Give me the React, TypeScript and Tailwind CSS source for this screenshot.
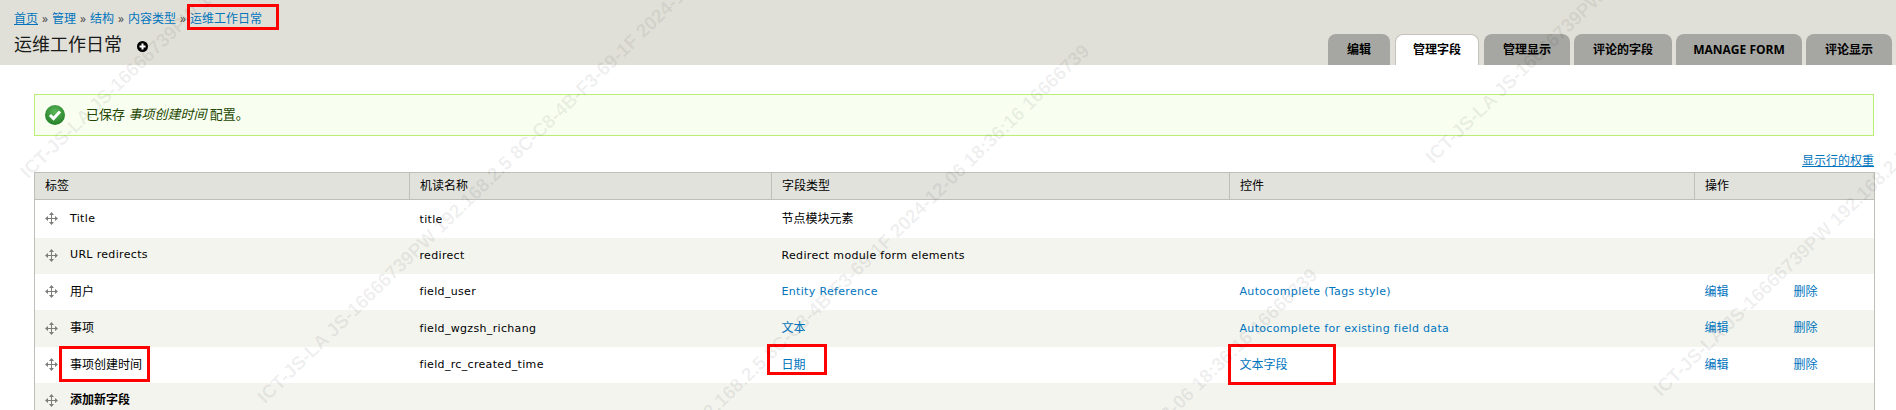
const FONT = "font-['Open_Sans','Noto_Sans_CJK_SC',sans-serif]";

const tabs = [
  { label: "编辑", w: "w-[62px]" },
  { label: "管理字段", w: "w-[84px] mx-[1px]", active: true },
  { label: "管理显示", w: "w-[86px]" },
  { label: "评论的字段", w: "w-[98px]" },
  { label: "MANAGE FORM", w: "w-[126px]" },
  { label: "评论显示", w: "w-[86px]" },
];

const rows = [
  { label: "Title", name: "title", type: "节点模块元素", h: "h-[38px]" },
  { label: "URL redirects", name: "redirect", type: "Redirect module form elements", h: "h-[36px]", even: true },
  { label: "用户", name: "field_user", type: "Entity Reference", link: true, widget: "Autocomplete (Tags style)", ops: true, h: "h-[36px]" },
  { label: "事项", name: "field_wgzsh_richang", type: "文本", link: true, widget: "Autocomplete for existing field data", ops: true, h: "h-[37px]", even: true },
  { label: "事项创建时间", name: "field_rc_created_time", type: "日期", link: true, widget: "文本字段", ops: true, h: "h-[36px]" },
  { label: "添加新字段", name: "", type: "", h: "h-[36px]", even: true, bold: true },
];

const marks = [
  "left-[24px] top-[161px]",
  "left-[261px] top-[386px]",
  "left-[515px] top-[586px]",
  "left-[743px] top-[810px]",
  "left-[1429px] top-[146px]",
  "left-[1657px] top-[379px]",
];

const redBoxes = [
  "left-[187px] top-[4px] w-[92px] h-[26px]",
  "left-[59px] top-[346px] w-[91px] h-[36px]",
  "left-[767px] top-[344px] w-[60px] h-[31px]",
  "left-[1228px] top-[344px] w-[108px] h-[41px]",
];

function T({ s }: { s: string }) {
  const latin = !/[\u4e00-\u9fff]/.test(s);
  return <span className={latin ? "font-['DejaVu_Sans',sans-serif] text-[11px] tracking-[0.33px]" : ""}>{s}</span>;
}

function DragIcon() {
  return (
    <svg width="13" height="13" viewBox="0 0 13 13" className="shrink-0">
      <path d="M6.5 1.5V11.5M1.5 6.5H11.5" stroke="#7d7d7a" strokeWidth="1" fill="none" />
      <path d="M6.5 0L4 3H9ZM6.5 13L4 10H9ZM0 6.5L3 4V9ZM13 6.5L10 4V9Z" fill="#7d7d7a" />
    </svg>
  );
}

function A({ children, className = "" }: { children: React.ReactNode; className?: string }) {
  return <a className={`text-[#0074bd] ${className}`}>{children}</a>;
}

export default function App() {
  return (
    <div className={`relative h-[410px] w-[1896px] overflow-hidden bg-white text-[12px] text-black ${FONT}`}>
      <header className="flex h-[65px] items-end justify-between bg-[#e0e0d8] pl-[14px] pr-[4px]">
        <div className="self-start pt-[10px]">
          <div className="flex h-[18px] items-center gap-[4px] text-[12px] text-[#444]">
            <A className="underline">首页</A><span>»</span>
            <A>管理</A><span>»</span>
            <A>结构</A><span>»</span>
            <A>内容类型</A><span>»</span>
            <A>运维工作日常</A>
          </div>
          <div className="mt-[2px] flex items-center">
            <h1 className="text-[18px] font-normal leading-[28px] text-[#1a1a1a]">运维工作日常</h1>
            <svg width="11" height="11" viewBox="0 0 11 11" className="ml-[15px] mt-[4px]">
              <circle cx="5.5" cy="5.5" r="5.5" fill="#000" />
              <path d="M5.5 2.5V8.5M2.5 5.5H8.5" stroke="#fff" strokeWidth="2" />
            </svg>
          </div>
        </div>
        <nav className="flex gap-[4px]">
          {tabs.map((t) => (
            <div
              key={t.label}
              className={`${t.w} flex h-[31px] items-center justify-center rounded-t-[8px] text-[12px] font-bold ${
                t.active ? "border border-b-0 border-[#c4c4bc] bg-white" : "bg-[#a6a7a2]"
              }`}
            >
              {t.label}
            </div>
          ))}
        </nav>
      </header>

      <main className="pl-[34px] pr-[22px] pt-[29px]">
        <div className="flex h-[42px] items-center border border-[#bbee77] bg-[#f8fff0] pl-[10px] text-[13px] text-[#234600]">
          <svg width="20" height="20" viewBox="0 0 20 20">
            <defs>
              <radialGradient id="ok" cx="50%" cy="35%" r="70%">
                <stop offset="0%" stopColor="#5cb85a" />
                <stop offset="100%" stopColor="#1f7a24" />
              </radialGradient>
            </defs>
            <circle cx="10" cy="10" r="10" fill="url(#ok)" />
            <path d="M5 10L8.5 13.5L15 6.5" stroke="#fff" strokeWidth="3" fill="none" />
          </svg>
          <span className="ml-[21px]">
            已保存 <em>事项创建时间</em> 配置。
          </span>
        </div>

        <div className="flex h-[36px] items-center justify-end pt-[14px]">
          <A className="underline">显示行的权重</A>
        </div>

        <table className="w-[1840px] table-fixed border-collapse border border-[#bebfb9]">
          <colgroup>
            <col className="w-[375px]" />
            <col className="w-[362px]" />
            <col className="w-[458px]" />
            <col className="w-[465px]" />
            <col className="w-[99px]" />
            <col className="w-[81px]" />
          </colgroup>
          <thead>
            <tr className="h-[27px] border-b border-[#bebfb9] bg-[#e1e2dc] text-left">
              {["标签", "机读名称", "字段类型", "控件"].map((h, i) => (
                <th key={h} className={`pl-[10px] font-normal ${i ? "border-l border-[#bebfb9]" : ""}`}>{h}</th>
              ))}
              <th colSpan={2} className="border-l border-[#bebfb9] pl-[10px] font-normal">操作</th>
            </tr>
          </thead>
          <tbody>
            {rows.map((r) => (
              <tr key={r.label} className={`${r.h} ${r.even ? "bg-[#f3f4ee]" : "bg-white"}`}>
                <td className="pl-[10px]">
                  <div className={`flex items-center gap-[12px] ${r.bold ? "font-bold" : ""}`}>
                    <DragIcon />
                    <T s={r.label} />
                  </div>
                </td>
                <td className="pl-[10px]"><T s={r.name} /></td>
                <td className="pl-[10px]">{r.link ? <A><T s={r.type} /></A> : <T s={r.type} />}</td>
                <td className="pl-[10px]">{r.widget && <A><T s={r.widget} /></A>}</td>
                <td className="pl-[10px]">{r.ops && <A>编辑</A>}</td>
                <td>{r.ops && <A>删除</A>}</td>
              </tr>
            ))}
          </tbody>
        </table>
      </main>

      {redBoxes.map((c) => (
        <div key={c} className={`absolute border-[3px] border-[#f00] ${c}`} />
      ))}

      <div className="pointer-events-none absolute inset-0 overflow-hidden">
        {marks.map((c) => (
          <span
            key={c}
            className={`absolute ${c} origin-left rotate-[-44deg] whitespace-nowrap font-['Liberation_Sans',sans-serif] text-[19px] font-bold text-[rgba(0,0,0,0.07)]`}
          >
            ICT-JS-LA JS-16666739PW 192.168.2.5 8C-C8-4B-F3-69-1F 2024-12-06 18:36:16 16666739
          </span>
        ))}
      </div>
    </div>
  );
}
